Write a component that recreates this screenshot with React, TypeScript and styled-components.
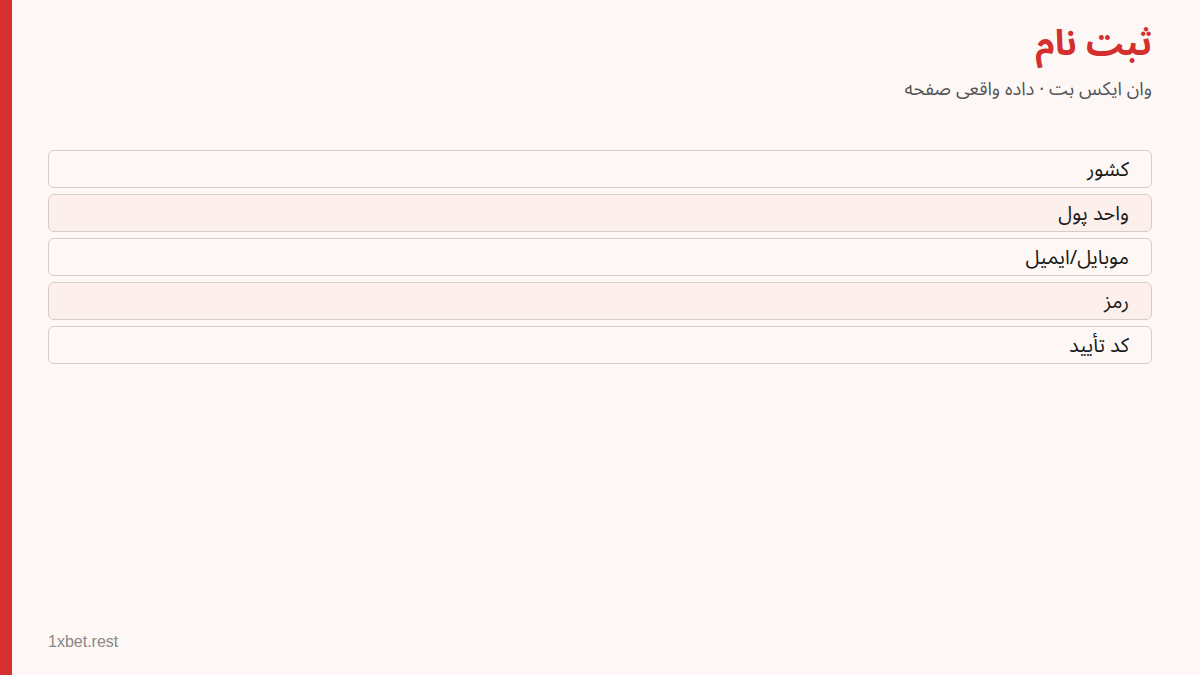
import React from "react";
import styled, { createGlobalStyle } from "styled-components";

const Global = createGlobalStyle`
  html, body { margin: 0; padding: 0; }
  body { background: #fdf8f5; font-family: "Noto Sans Arabic", "Noto Sans Arabic UI", "Noto Sans", sans-serif; }
`;

const Page = styled.div`
  width: 1200px;
  height: 675px;
  display: flex;
  background: #fdf8f5;
  overflow: hidden;
`;

const Accent = styled.div`
  width: 12px;
  flex: none;
  background: #d63031;
`;

const Main = styled.main`
  flex: 1;
  display: flex;
  flex-direction: column;
  padding: 21px 48px 24px 36px;
`;

const Header = styled.header`
  direction: rtl;
  display: flex;
  flex-direction: column;
  gap: 9px;
`;

const Title = styled.h1`
  margin: 0;
  font-size: 35px;
  line-height: 46px;
  font-weight: 700;
  color: #d32f2f;
`;

const Subtitle = styled.p`
  margin: 0;
  font-size: 18.5px;
  line-height: 28px;
  color: #555;
`;

const Fields = styled.div`
  direction: rtl;
  margin-top: 46px;
  display: flex;
  flex-direction: column;
  gap: 6px;
`;

const Field = styled.div<{ $tint: boolean }>`
  height: 38px;
  box-sizing: border-box;
  display: flex;
  align-items: center;
  padding: 2px 22px 0;
  border: 1px solid #d2cdca;
  border-radius: 6px;
  background: ${(p) => (p.$tint ? "#fdefeb" : "#fdf8f5")};
  font-size: 20px;
  color: #1a1a1a;
`;

const Footer = styled.footer`
  margin-top: auto;
  font-family: "Liberation Sans", Arial, sans-serif;
  font-size: 16px;
  color: #8a8684;
`;

const labels = ["کشور", "واحد پول", "موبایل/ایمیل", "رمز", "کد تأیید"];

export default function App() {
  return (
    <>
      <Global />
      <Page>
        <Accent />
        <Main>
          <Header>
            <Title>ثبت نام</Title>
            <Subtitle>وان ایکس بت · داده واقعی صفحه</Subtitle>
          </Header>
          <Fields>
            {labels.map((l, i) => (
              <Field key={l} $tint={i % 2 === 1}>
                {l}
              </Field>
            ))}
          </Fields>
          <Footer>1xbet.rest</Footer>
        </Main>
      </Page>
    </>
  );
}
